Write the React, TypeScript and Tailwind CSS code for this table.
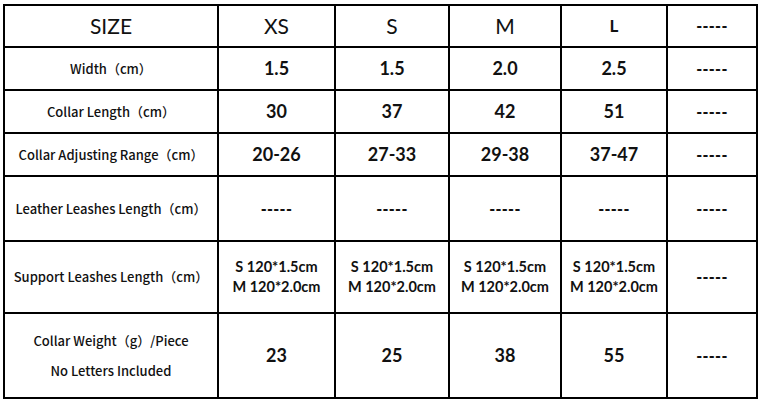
const label = "font-['Noto_Sans_CJK_SC',sans-serif] text-[13px] font-medium text-[#111]";
const num = "font-['Lato','Noto_Sans_CJK_SC',sans-serif] text-[18px] font-bold text-[#111]";
const dash = "font-['Lato',sans-serif] text-[16px] font-black tracking-[0.3px] text-[#111]";

const sizes = ['XS', 'S', 'M'];

const rows: { label: React.ReactNode; values: string[] }[] = [
  { label: 'Width（cm）', values: ['1.5', '1.5', '2.0', '2.5'] },
  { label: 'Collar Length（cm）', values: ['30', '37', '42', '51'] },
  { label: 'Collar Adjusting Range（cm）', values: ['20-26', '27-33', '29-38', '37-47'] },
  { label: 'Leather Leashes Length（cm）', values: ['-----', '-----', '-----', '-----'] },
];

function Cell({ children, className = '' }: { children?: React.ReactNode; className?: string }) {
  return <div className={`bg-white flex items-center justify-center text-center ${className}`}>{children}</div>;
}

export default function App() {
  return (
    <div className="bg-white w-[761px] h-[401px] pt-[4px] pl-[3px]">
      <div className="grid bg-black p-[2px] gap-[2px] w-fit grid-cols-[212px_115px_112px_110px_104px_88px] grid-rows-[40px_41px_41px_41px_63px_70px_83px]">
        <Cell className="font-['Lato',sans-serif] text-[21px] text-[#111]">SIZE</Cell>
        {sizes.map((s) => (
          <Cell key={s} className="font-['Lato',sans-serif] text-[21px] text-[#111]">
            {s}
          </Cell>
        ))}
        <Cell className="font-['Lato',sans-serif] text-[17px] font-bold text-[#111]">L</Cell>
        <Cell className={dash}>-----</Cell>

        {rows.map((r) => (
          <>
            <Cell className={label}>{r.label}</Cell>
            {r.values.map((v, i) => (
              <Cell key={i} className={v === '-----' ? dash : num}>
                {v}
              </Cell>
            ))}
            <Cell className={dash}>-----</Cell>
          </>
        ))}

        <Cell className={label}>Support Leashes Length（cm）</Cell>
        {[0, 1, 2, 3].map((i) => (
          <Cell key={i} className="font-['Lato',sans-serif] text-[14.5px] font-bold text-[#111] leading-[20px]">
            <div>
              <div>S 120*1.5cm</div>
              <div>M 120*2.0cm</div>
            </div>
          </Cell>
        ))}
        <Cell className={dash}>-----</Cell>

        <Cell className={label}>
          <div className="leading-[30px]">
            <div>Collar Weight（g）/Piece</div>
            <div>No Letters Included</div>
          </div>
        </Cell>
        {['23', '25', '38', '55'].map((v) => (
          <Cell key={v} className={num}>
            {v}
          </Cell>
        ))}
        <Cell className={dash}>-----</Cell>
      </div>
    </div>
  );
}
